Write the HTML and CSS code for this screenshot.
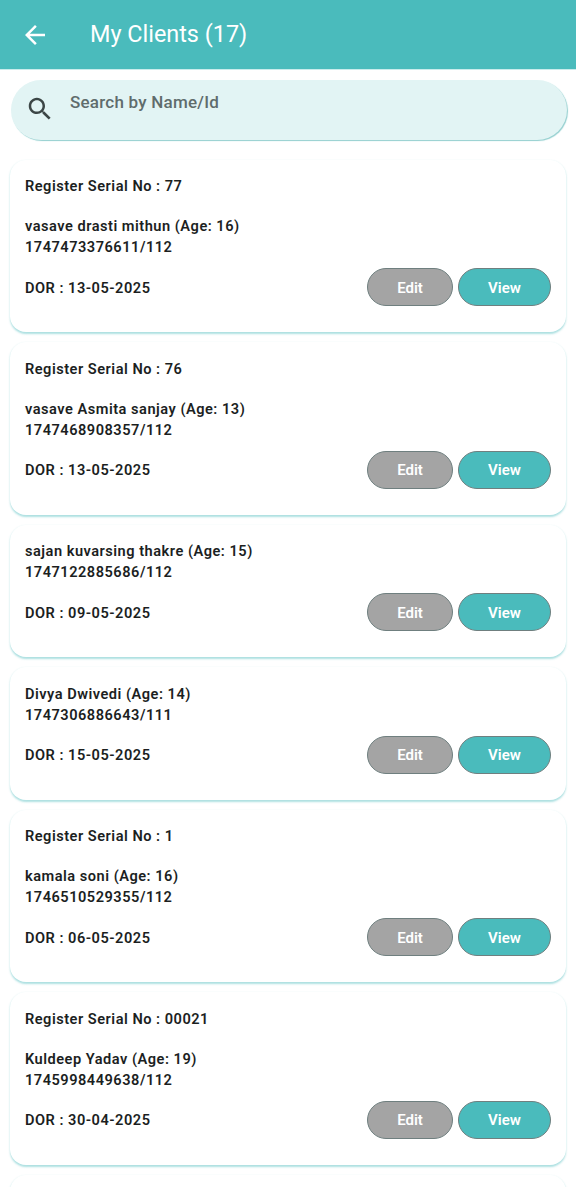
FILE: index.html
```
<!DOCTYPE html>
<html lang="en">
<head>
    <meta charset="UTF-8">
    <meta name="viewport" content="width=device-width, initial-scale=1.0">
    <title>My Clients</title>
    <link rel="stylesheet" href="styles.css">
</head>
<body>
    <header class="app-bar">
        <svg class="back-icon" viewBox="0 0 24 24">
            <path d="M20 11H7.83l5.59-5.59L12 4l-8 8 8 8 1.41-1.41L7.83 13H20v-2z"/>
        </svg>
        <h1 class="title">My Clients (17)</h1>
    </header>

    <div class="search">
        <svg class="search-icon" viewBox="0 0 24 24">
            <path d="M15.5 14h-.79l-.28-.27C15.41 12.59 16 11.11 16 9.5 16 5.91 13.09 3 9.5 3S3 5.91 3 9.5 5.91 16 9.5 16c1.61 0 3.09-.59 4.23-1.57l.27.28v.79l5 4.99L20.49 19l-4.99-5zm-6 0C7.01 14 5 11.99 5 9.5S7.01 5 9.5 5 14 7.01 14 9.5 11.99 14 9.5 14z"/>
        </svg>
        <span class="placeholder">Search by Name/Id</span>
    </div>

    <main class="list">
        <div class="card">
            <p class="serial">Register Serial No : 77</p>
            <p>vasave drasti mithun (Age: 16)</p>
            <p>1747473376611/112</p>
            <div class="card-row">
                <span class="dor">DOR : 13-05-2025</span>
                <div class="actions">
                    <button class="btn edit">Edit</button>
                    <button class="btn view">View</button>
                </div>
            </div>
        </div>

        <div class="card">
            <p class="serial">Register Serial No : 76</p>
            <p>vasave Asmita sanjay (Age: 13)</p>
            <p>1747468908357/112</p>
            <div class="card-row">
                <span class="dor">DOR : 13-05-2025</span>
                <div class="actions">
                    <button class="btn edit">Edit</button>
                    <button class="btn view">View</button>
                </div>
            </div>
        </div>

        <div class="card">
            <p>sajan kuvarsing thakre (Age: 15)</p>
            <p>1747122885686/112</p>
            <div class="card-row">
                <span class="dor">DOR : 09-05-2025</span>
                <div class="actions">
                    <button class="btn edit">Edit</button>
                    <button class="btn view">View</button>
                </div>
            </div>
        </div>

        <div class="card">
            <p>Divya Dwivedi (Age: 14)</p>
            <p>1747306886643/111</p>
            <div class="card-row">
                <span class="dor">DOR : 15-05-2025</span>
                <div class="actions">
                    <button class="btn edit">Edit</button>
                    <button class="btn view">View</button>
                </div>
            </div>
        </div>

        <div class="card">
            <p class="serial">Register Serial No : 1</p>
            <p>kamala soni (Age: 16)</p>
            <p>1746510529355/112</p>
            <div class="card-row">
                <span class="dor">DOR : 06-05-2025</span>
                <div class="actions">
                    <button class="btn edit">Edit</button>
                    <button class="btn view">View</button>
                </div>
            </div>
        </div>

        <div class="card">
            <p class="serial">Register Serial No : 00021</p>
            <p>Kuldeep Yadav (Age: 19)</p>
            <p>1745998449638/112</p>
            <div class="card-row">
                <span class="dor">DOR : 30-04-2025</span>
                <div class="actions">
                    <button class="btn edit">Edit</button>
                    <button class="btn view">View</button>
                </div>
            </div>
        </div>

        <!-- next card, cut off by the bottom of the screen -->
        <div class="card"></div>
    </main>
</body>
</html>
```
FILE: styles.css
```
* {
    box-sizing: border-box;
}

body, html {
    margin: 0;
    padding: 0;
    height: 100%;
    overflow: hidden;
    font-family: Roboto, sans-serif;
    background: #fff;
}

body {
    display: flex;
    flex-direction: column;
}

/* Top bar */
.app-bar {
    flex: none;
    display: flex;
    align-items: center;
    height: 69px;
    padding-left: 20px;
    background: #4abbbc;
    color: #fff;
    box-shadow: 0 1px 0 #c9ecec;
}

.back-icon {
    width: 30px;
    height: 30px;
    fill: #fff;
}

.title {
    margin: 0 0 2px 40px;
    font-size: 23.4px;
    font-weight: 400;
    line-height: 28px;
}

/* Search field */
.search {
    flex: none;
    display: flex;
    height: 60px;
    margin: 11px 9px 0 10.5px;
    padding: 0 14.5px;
    border-radius: 30px;
    background: #e2f4f4;
    box-shadow: 1px 1px 1px #93cfcf;
}

.search-icon {
    width: 30px;
    height: 30px;
    margin-top: 14px;
    fill: #3c4646;
}

.placeholder {
    margin: 12px 0 0 15px;
    font-size: 17px;
    font-weight: 500;
    line-height: 20px;
    letter-spacing: 0.23px;
    color: #5f6c6c;
}

/* Client cards */
.list {
    display: flex;
    flex-direction: column;
    gap: 10px;
    padding: 19.5px 10px 0;
}

.card {
    flex: none;
    min-height: 132.5px;
    padding: 16.5px 15px 26px;
    border-radius: 16px;
    background: #fff;
    box-shadow: 0 1.5px 2px rgba(74, 187, 188, 0.45);
    font-size: 14.6px;
    font-weight: 600;
    line-height: 20.5px;
    letter-spacing: 0.5px;
    color: #1c1f1f;
}

.card p {
    margin: 0 0 0.5px;
}

.card .serial {
    margin-bottom: 19.5px;
}

.card-row {
    display: flex;
    align-items: center;
    justify-content: space-between;
    margin-top: 10.5px;
}

.dor {
    padding-top: 2px;
}

.actions {
    display: flex;
    gap: 5px;
}

.btn {
    height: 38px;
    padding: 1px 0 0;
    border: 1px solid #6f7f7f;
    border-radius: 19px;
    font-family: inherit;
    font-size: 15px;
    font-weight: 600;
    color: #fff;
}

.edit {
    width: 86px;
    background: #a4a4a4;
}

.view {
    width: 93px;
    background: #4abbbc;
}
```
